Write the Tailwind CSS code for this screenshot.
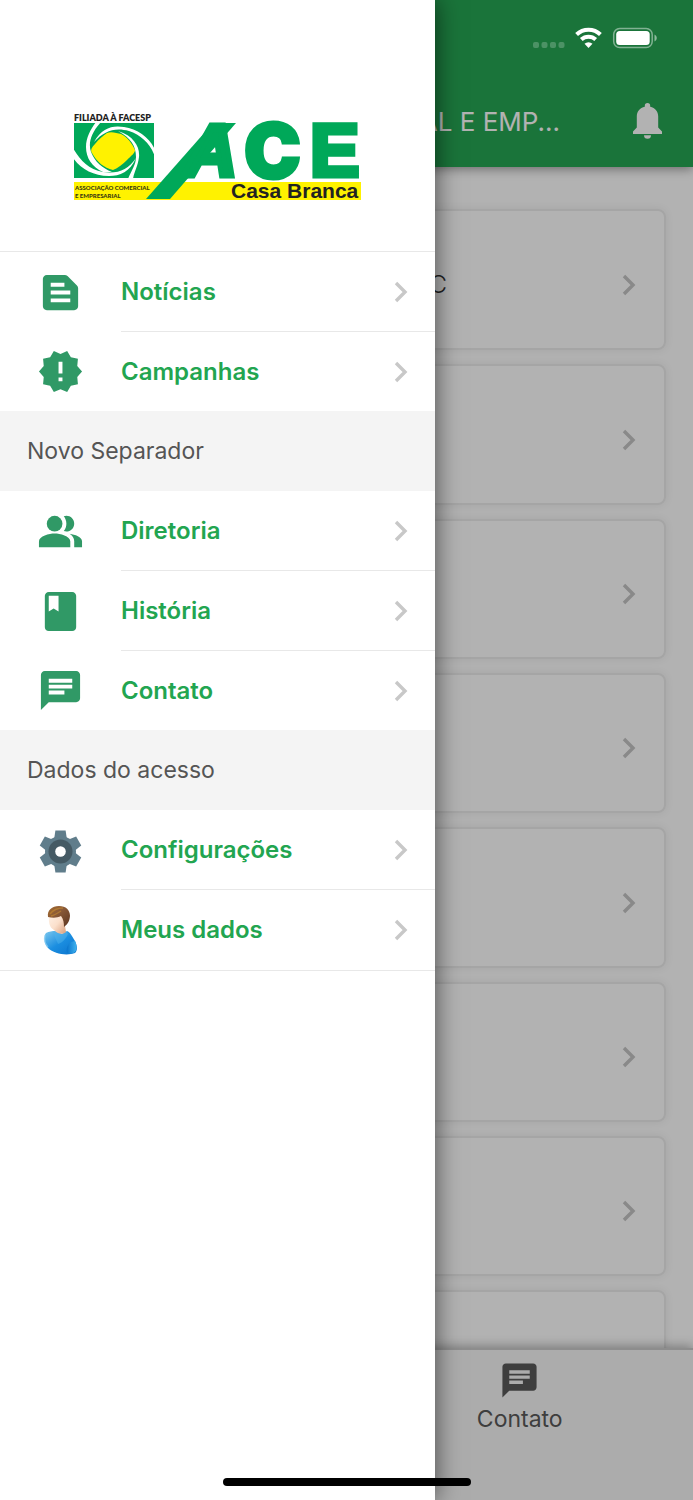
<!DOCTYPE html>
<html lang="pt-BR">
<head>
    <meta charset="UTF-8">
    <meta name="viewport" content="width=device-width, initial-scale=1.0">
    <title>ACE Casa Branca</title>
    <script src="https://cdn.jsdelivr.net/npm/@tailwindcss/browser@4"></script>
</head>
<body class="relative flex flex-col h-screen overflow-hidden bg-white font-['Inter','Liberation_Sans',sans-serif]">

    <!-- Shared icons -->
    <svg class="hidden">
        <symbol id="chevron" viewBox="0 0 14 22"><path d="M2 2l9 9-9 9" fill="none" stroke="currentColor" stroke-width="3.4"/></symbol>
        <symbol id="chat" viewBox="0 0 24 24"><path fill="currentColor" d="M20 2H4c-1.1 0-1.99.9-1.99 2L2 22l4-4h14c1.1 0 2-.9 2-2V4c0-1.1-.9-2-2-2zM6 9h12v2H6V9zm8 5H6v-2h8v2zm4-6H6V6h12v2z"/></symbol>
    </svg>

    <!-- Header -->
    <header class="relative z-10 shrink-0 h-[167px] pt-[76px] bg-[#26a653] text-white shadow-[0_2px_10px_rgba(0,0,0,0.4)]">
        <div class="flex items-center h-[90px] pr-[30px]">
            <h1 class="flex-1 text-right text-[26px] whitespace-nowrap overflow-hidden">COMERCIAL E EMP...</h1>
            <button type="button" aria-label="Notificações" class="ml-[72px]">
                <svg class="w-[31px] h-[36px]" viewBox="0 0 31 36" fill="currentColor">
                    <path d="M15.500 0a2.700 2.700 0 0 0-2.700 2.700v1C7.800 4.900 4.800 8.600 4.800 13.500v11L1 28.500V31h29v-2.500l-3.800-4v-11c0-4.900-3-8.600-8-9.800v-1A2.700 2.700 0 0 0 15.500 0z"/>
                    <path d="M12 32.300h7a3.500 3.500 0 0 1-7 0z"/>
                </svg>
            </button>
        </div>
    </header>

    <!-- News list -->
    <main class="flex-1 min-h-0 overflow-hidden pt-[42px] px-[27px] flex flex-col gap-[14px] text-[#c4c4c4]">
        <a href="#" class="shrink-0 flex items-center justify-end h-[141px] pt-[10px] pr-[28px] rounded-lg border-2 border-[#ececec] shadow-[0_0_8px_rgba(0,0,0,0.08)]">
            <span class="text-2xl font-light text-[#333] mr-[175px]">C</span>
            <svg class="w-[14px] h-[22px]"><use href="#chevron"/></svg>
        </a>
        <a href="#" class="shrink-0 flex items-center justify-end h-[141px] pt-[10px] pr-[28px] rounded-lg border-2 border-[#ececec] shadow-[0_0_8px_rgba(0,0,0,0.08)]">
            <svg class="w-[14px] h-[22px]"><use href="#chevron"/></svg>
        </a>
        <a href="#" class="shrink-0 flex items-center justify-end h-[140px] pt-[10px] pr-[28px] rounded-lg border-2 border-[#ececec] shadow-[0_0_8px_rgba(0,0,0,0.08)]">
            <svg class="w-[14px] h-[22px]"><use href="#chevron"/></svg>
        </a>
        <a href="#" class="shrink-0 flex items-center justify-end h-[140px] pt-[10px] pr-[28px] rounded-lg border-2 border-[#ececec] shadow-[0_0_8px_rgba(0,0,0,0.08)]">
            <svg class="w-[14px] h-[22px]"><use href="#chevron"/></svg>
        </a>
        <a href="#" class="shrink-0 flex items-center justify-end h-[141px] pt-[10px] pr-[28px] rounded-lg border-2 border-[#ececec] shadow-[0_0_8px_rgba(0,0,0,0.08)]">
            <svg class="w-[14px] h-[22px]"><use href="#chevron"/></svg>
        </a>
        <a href="#" class="shrink-0 flex items-center justify-end h-[140px] pt-[10px] pr-[28px] rounded-lg border-2 border-[#ececec] shadow-[0_0_8px_rgba(0,0,0,0.08)]">
            <svg class="w-[14px] h-[22px]"><use href="#chevron"/></svg>
        </a>
        <a href="#" class="shrink-0 flex items-center justify-end h-[140px] pt-[10px] pr-[28px] rounded-lg border-2 border-[#ececec] shadow-[0_0_8px_rgba(0,0,0,0.08)]">
            <svg class="w-[14px] h-[22px]"><use href="#chevron"/></svg>
        </a>
        <a href="#" class="shrink-0 flex items-center justify-end h-[141px] pt-[10px] pr-[28px] rounded-lg border-2 border-[#ececec] shadow-[0_0_8px_rgba(0,0,0,0.08)]">
            <svg class="w-[14px] h-[22px]"><use href="#chevron"/></svg>
        </a>
    </main>

    <!-- Bottom tabs -->
    <nav class="relative shrink-0 h-[152px] grid grid-cols-2 border-t-2 border-[#cacaca] bg-[#f7f7f7] text-[#595959] shadow-[0_-2px_10px_rgba(0,0,0,0.3)]">
        <a href="#" class="col-start-2 flex flex-col items-center pt-[10px]">
            <svg class="w-[41px] h-[41px]"><use href="#chat"/></svg>
            <span class="mt-[2px] text-[23px] leading-8">Contato</span>
        </a>
    </nav>

    <!-- Backdrop -->
    <div class="absolute inset-0 z-20 bg-black/30"></div>

    <!-- Status bar -->
    <div class="absolute top-[27px] right-[35px] z-20 flex items-center gap-[10px] text-white">
        <svg class="w-[32px] h-[22px]" viewBox="0 0 32 22" fill="currentColor" opacity=".22">
            <rect x="0" y="15" width="6" height="6" rx="2"/><rect x="8.500" y="15" width="6" height="6" rx="2"/><rect x="17" y="15" width="6" height="6" rx="2"/><rect x="25.500" y="15" width="6" height="6" rx="2"/>
        </svg>
        <svg class="w-[27px] h-[22px]" viewBox="0 0 27 22" fill="none" stroke="currentColor" stroke-width="4">
            <path d="M1.600 7.500a17 17 0 0 1 23.800 0"/>
            <path d="M6.300 12.500a10.500 10.500 0 0 1 14.400 0"/>
            <path d="M13.500 21l-4-4.300a6 6 0 0 1 8 0z" fill="currentColor" stroke="none"/>
        </svg>
        <svg class="w-[46px] h-[22px]" viewBox="0 0 46 22">
            <rect x="1.700" y="1.500" width="38.500" height="19" rx="6" fill="none" stroke="currentColor" stroke-opacity=".45" stroke-width="1.500"/>
            <rect x="4.200" y="4" width="33.500" height="14" rx="3.500" fill="currentColor"/>
            <path d="M42.500 7.500c3 1.500 3 5.500 0 7z" fill="currentColor" opacity=".5"/>
        </svg>
    </div>

    <!-- Side menu -->
    <aside class="absolute inset-y-0 left-0 z-30 w-[435px] bg-white shadow-[0_0_24px_rgba(0,0,0,0.6)]">
        <div class="h-[252px] pt-[108px] flex justify-center items-start border-b border-[#e8e8e8]">
            <svg class="w-[291px] h-[96px] overflow-visible" viewBox="72 108 291 96" role="img" aria-label="ACE Casa Branca">
                <text x="74" y="121" font-size="9" font-weight="800" font-family="Lato" fill="#222">FILIADA À FACESP</text>
                <rect x="74" y="182" width="287" height="18" fill="#fff200"/>
                <clipPath id="emblem"><rect x="74" y="123" width="80" height="55"/></clipPath>
                <g clip-path="url(#emblem)">
                    <rect x="74" y="123" width="80" height="55" fill="#00a859"/>
                    <path d="M92 153C90 150 92 147 95 144C99 139 103 136 107 133C111 131 117 133 121 134C127 137 132 143 135 150C135 153 131 156 127 160C123 164 118 168 113 170C104 168 97 162 92 153z" fill="#fff200"/>
                    <g fill="#fff">
                        <path d="M94 142C102 128 112 125 124 127C138 129 150 138 155 150V157C151 144 141 135 129 131C115 127 104 131 94 142z"/>
                        <path d="M118 131C134 136 140 147 139 157C138 166 134 172 133 179H128C131 171 136 165 136 157C136 146 131 138 118 131z"/>
                        <path d="M136 158C130 172 120 176 109 176C93 176 81 169 73 158V148C80 160 88 169 103 172C118 174 128 170 136 158z"/>
                        <path d="M101 122C91 133 88 143 91 152C95 162 102 168 112 172H103C92 167 86 158 86 147C86 137 91 129 96 122z"/>
                    </g>
                </g>
                <polygon points="213,123 236,123 170,199 146,199" fill="#00a859"/>
                <g fill="#00a859" stroke="#00a859">
                    <text x="184" y="176" stroke-width="5" font-family="Liberation Sans" font-weight="700" font-size="74" font-style="italic">A</text>
                    <text x="244" y="178" stroke-width="3" font-family="Inter" font-weight="900" font-size="76">C</text>
                    <text x="310" y="176" stroke-width="5" font-family="Liberation Sans" font-weight="700" font-size="74">E</text>
                </g>
                <g font-family="Lato" font-weight="900" font-size="6" fill="#3a3a10">
                    <text x="75" y="190">ASSOCIAÇÃO COMERCIAL</text>
                    <text x="75" y="198">E EMPRESARIAL</text>
                </g>
                <text x="231" y="198" font-family="Liberation Sans" font-weight="700" font-size="21" fill="#222">Casa Branca</text>
            </svg>
        </div>

        <nav class="text-2xl font-semibold text-[#22a550]">
            <a href="#" class="flex items-center h-20 pl-[37px]">
                <svg class="w-[47px] h-[47px] text-[#309966]" viewBox="0 0 24 24" fill="currentColor"><path d="M20.410 8.410l-4.830-4.830C15.210 3.210 14.700 3 14.170 3H5C3.900 3 3 3.900 3 5v14c0 1.100.900 2 2 2h14c1.100 0 2-.900 2-2V9.830C21 9.300 20.790 8.790 20.410 8.410zM7 7h7v2H7V7zM17 17H7v-2h10V17zM17 13H7v-2h10V13z"/></svg>
                <span class="ml-[37px] flex-1 self-stretch flex items-center justify-between pr-[27px] border-b border-[#e8e8e8]">Notícias
                    <svg class="w-[14px] h-[22px] text-[#c8c8c8]"><use href="#chevron"/></svg>
                </span>
            </a>
            <a href="#" class="flex items-center h-[79px] pl-[37px]">
                <svg class="w-[47px] h-[47px] text-[#309966]" viewBox="0 0 24 24" fill="currentColor"><path d="M23 12l-2.440-2.780.340-3.680-3.610-.820-1.890-3.180L12 3 8.600 1.540 6.710 4.720l-3.610.810.340 3.680L1 12l2.440 2.780-.340 3.690 3.610.820 1.890 3.180L12 21l3.400 1.460 1.890-3.180 3.610-.820-.340-3.680L23 12zm-10 5h-2v-2h2v2zm0-4h-2V7h2v6z"/></svg>
                <span class="ml-[37px] flex-1 flex items-center justify-between pr-[27px]">Campanhas
                    <svg class="w-[14px] h-[22px] text-[#c8c8c8]"><use href="#chevron"/></svg>
                </span>
            </a>

            <h2 class="flex items-center h-20 pl-[27px] bg-[#f4f4f4] text-[23px] font-normal text-[#555]">Novo Separador</h2>

            <a href="#" class="flex items-center h-20 pl-[37px]">
                <svg class="w-[47px] h-[47px] text-[#309966]" viewBox="0 0 24 24" fill="currentColor"><path d="M16.670 13.130C18.040 14.060 19 15.320 19 17v3h4v-3c0-2.180-3.570-3.470-6.330-3.870z"/><circle cx="9" cy="8" r="4"/><path d="M15 12c2.210 0 4-1.790 4-4s-1.790-4-4-4c-.470 0-.910.100-1.330.240C14.500 5.270 15 6.580 15 8s-.500 2.730-1.330 3.760c.420.140.860.240 1.330.240zM9 13c-2.670 0-8 1.340-8 4v3h16v-3c0-2.660-5.330-4-8-4z"/></svg>
                <span class="ml-[37px] flex-1 self-stretch flex items-center justify-between pr-[27px] border-b border-[#e8e8e8]">Diretoria
                    <svg class="w-[14px] h-[22px] text-[#c8c8c8]"><use href="#chevron"/></svg>
                </span>
            </a>
            <a href="#" class="flex items-center h-20 pl-[37px]">
                <svg class="w-[47px] h-[47px] text-[#309966]" viewBox="0 0 24 24" fill="currentColor"><path d="M18 2H6c-1.100 0-2 .900-2 2v16c0 1.100.900 2 2 2h12c1.100 0 2-.900 2-2V4c0-1.100-.900-2-2-2zM6 4h5v8l-2.500-1.500L6 12V4z"/></svg>
                <span class="ml-[37px] flex-1 self-stretch flex items-center justify-between pr-[27px] border-b border-[#e8e8e8]">História
                    <svg class="w-[14px] h-[22px] text-[#c8c8c8]"><use href="#chevron"/></svg>
                </span>
            </a>
            <a href="#" class="flex items-center h-[79px] pl-[37px]">
                <svg class="w-[47px] h-[47px] text-[#309966]"><use href="#chat"/></svg>
                <span class="ml-[37px] flex-1 flex items-center justify-between pr-[27px]">Contato
                    <svg class="w-[14px] h-[22px] text-[#c8c8c8]"><use href="#chevron"/></svg>
                </span>
            </a>

            <h2 class="flex items-center h-20 pl-[27px] bg-[#f4f4f4] text-[23px] font-normal text-[#555]">Dados do acesso</h2>

            <a href="#" class="flex items-center h-20 pl-[37px]">
                <svg class="w-[47px] h-[47px]" viewBox="0 0 47 47">
                    <g fill="#607d8b">
                        <circle cx="23.500" cy="24.500" r="15.500"/>
                        <path id="teeth" d="M18.400 3.500h10.200l1.200 8v26l-1.200 8H18.400l-1.200-8v-26z"/>
                        <use href="#teeth" transform="rotate(60 23.500 24.500)"/>
                        <use href="#teeth" transform="rotate(120 23.500 24.500)"/>
                    </g>
                    <circle cx="23.500" cy="24.500" r="12" fill="#455a64"/>
                    <circle cx="23.500" cy="24.500" r="5.300" fill="#fff"/>
                </svg>
                <span class="ml-[37px] flex-1 self-stretch flex items-center justify-between pr-[27px] border-b border-[#e8e8e8]">Configurações
                    <svg class="w-[14px] h-[22px] text-[#c8c8c8]"><use href="#chevron"/></svg>
                </span>
            </a>
            <a href="#" class="flex items-center h-[81px] pl-[37px] border-b border-[#e8e8e8]">
                <svg class="w-[47px] h-[50px]" viewBox="0 0 47 50">
                    <defs>
                        <linearGradient id="shirt" x1="0" y1="0" x2="1" y2="1"><stop offset="0" stop-color="#7cc8ee"/><stop offset=".5" stop-color="#1b8ee0"/><stop offset="1" stop-color="#0a72cc"/></linearGradient>
                        <linearGradient id="arm" x1="0" y1="0" x2="1" y2="0"><stop offset="0" stop-color="#0873cc"/><stop offset="1" stop-color="#3fb2ee"/></linearGradient>
                        <linearGradient id="face" x1="0" y1="0" x2="1" y2="1"><stop offset="0" stop-color="#fff3e8"/><stop offset=".5" stop-color="#fbe0cc"/><stop offset="1" stop-color="#d99f7c"/></linearGradient>
                        <linearGradient id="hair" x1="0" y1="0" x2="1" y2="1"><stop offset="0" stop-color="#a36a2c"/><stop offset=".4" stop-color="#8a5a38"/><stop offset="1" stop-color="#5c3520"/></linearGradient>
                    </defs>
                    <path d="M9 28c3-1.500 6-2 10-2l6 3 5-3c3 1 5 5 8 10 2 4 3 9 0 12-8 3-21 1-27-5-4-4-5-11-2-15z" fill="url(#shirt)"/>
                    <path d="M30 48c-1-4 0-8 4-11l4-1c2 4 2 9 0 11-2 2-5 2-8 1z" fill="url(#arm)"/>
                    <path d="M8 30c-1 5 0 9 3 12" fill="none" stroke="#9bd9f7" stroke-width="1.500" opacity=".6"/>
                    <path d="M16 27c2 6 4 9 5 12 4-1 8-5 10-10l-2-3-4 3z" fill="#4fb4ec" opacity=".5"/>
                    <path d="M12 10c-.500 7 0 12 5 15 3 4 9 5 12 2l-1-6-1-13z" fill="url(#face)"/>
                    <path d="M11 12c-1-7 4-11 11-11 7 0 11 4 11 10-.500 5-2 8-6 11 0-4-.500-8-3-11-4 2-8 2-13 1z" fill="url(#hair)"/>
                    <path d="M13 9c3-4 7-6 13-6M14 11c4-1 7-3 10-5" fill="none" stroke="#cf9430" stroke-width="1.500" opacity=".5"/>
                </svg>
                <span class="ml-[37px] flex-1 flex items-center justify-between pr-[27px]">Meus dados
                    <svg class="w-[14px] h-[22px] text-[#c8c8c8]"><use href="#chevron"/></svg>
                </span>
            </a>
        </nav>
    </aside>

    <!-- Home indicator -->
    <div class="absolute bottom-[14px] left-1/2 -translate-x-1/2 z-40 w-[248px] h-2 rounded-full bg-black"></div>
</body>
</html>
